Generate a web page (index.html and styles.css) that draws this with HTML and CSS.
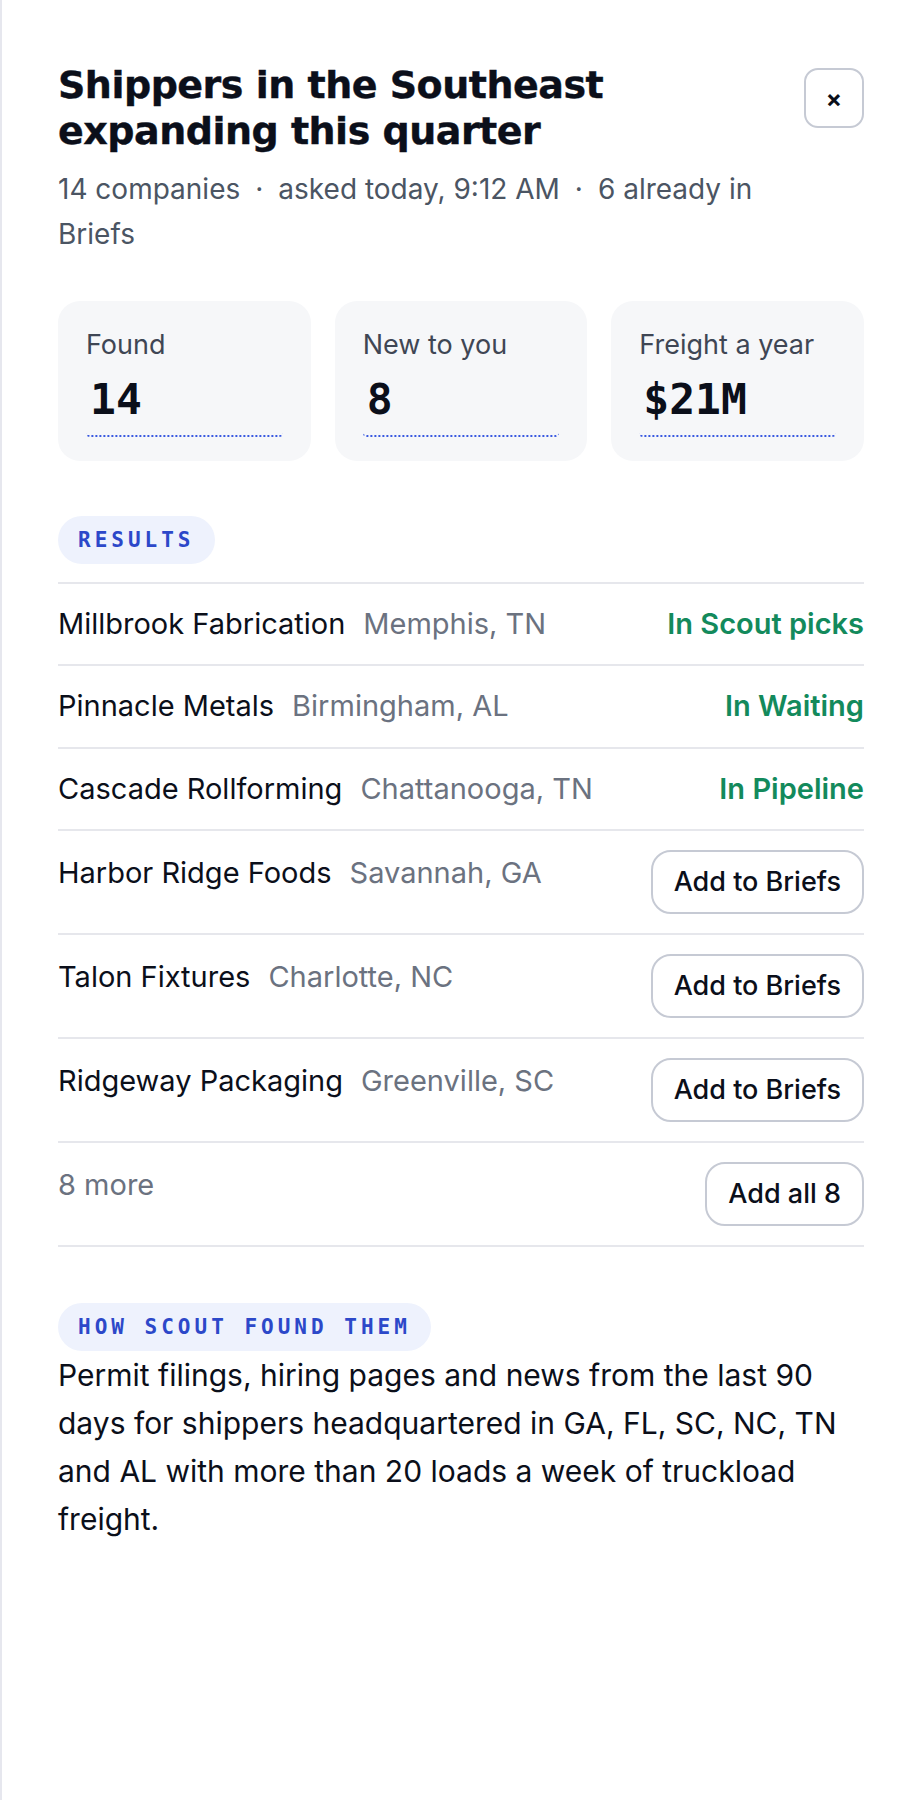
FILE: index.html
```html
<!DOCTYPE html>
<html>
<head>
    <title>Shippers in the Southeast</title>
    <link rel="stylesheet" href="styles.css">
</head>
<body>
    <div class="panel">
        <div class="header">
            <div class="header-text">
                <h1 class="title">Shippers in the Southeast expanding this quarter</h1>
                <p class="meta"><span>14 companies</span><span class="dot">·</span><span>asked today, 9:12 AM</span><span class="dot">·</span><span>6 already in</span> <span>Briefs</span></p>
            </div>
            <button class="close" type="button">×</button>
        </div>

        <div class="stats">
            <div class="stat">
                <div class="stat-label">Found</div>
                <div class="stat-value">14</div>
            </div>
            <div class="stat">
                <div class="stat-label">New to you</div>
                <div class="stat-value">8</div>
            </div>
            <div class="stat">
                <div class="stat-label">Freight a year</div>
                <div class="stat-value">$21M</div>
            </div>
        </div>

        <div class="tag">RESULTS</div>
        <div class="results">
            <div class="row">
                <div class="company"><span class="name">Millbrook Fabrication</span><span class="city">Memphis, TN</span></div>
                <span class="status">In Scout picks</span>
            </div>
            <div class="row">
                <div class="company"><span class="name">Pinnacle Metals</span><span class="city">Birmingham, AL</span></div>
                <span class="status">In Waiting</span>
            </div>
            <div class="row">
                <div class="company"><span class="name">Cascade Rollforming</span><span class="city">Chattanooga, TN</span></div>
                <span class="status">In Pipeline</span>
            </div>
            <div class="row row-action">
                <div class="company"><span class="name">Harbor Ridge Foods</span><span class="city">Savannah, GA</span></div>
                <button class="btn" type="button">Add to Briefs</button>
            </div>
            <div class="row row-action">
                <div class="company"><span class="name">Talon Fixtures</span><span class="city">Charlotte, NC</span></div>
                <button class="btn" type="button">Add to Briefs</button>
            </div>
            <div class="row row-action">
                <div class="company"><span class="name">Ridgeway Packaging</span><span class="city">Greenville, SC</span></div>
                <button class="btn" type="button">Add to Briefs</button>
            </div>
            <div class="row row-action">
                <div class="company"><span class="more">8 more</span></div>
                <button class="btn" type="button">Add all 8</button>
            </div>
        </div>

        <div class="tag tag-how">HOW SCOUT FOUND THEM</div>
        <p class="how">Permit filings, hiring pages and news from the last 90 days for shippers headquartered in GA, FL, SC, NC, TN and AL with more than 20 loads a week of truckload freight.</p>
    </div>
</body>
</html>
```

FILE: styles.css
```css
body {
    margin: 0;
    font-family: Inter, "Noto Sans", sans-serif;
    color: #0b0f1a;
    background: #ffffff;
}
.panel {
    min-height: 1800px;
    box-sizing: border-box;
    border-left: 2px solid #e6e7ee;
    padding: 62px 56px 40px 56px;
}
.header {
    display: flex;
    align-items: flex-start;
    gap: 24px;
}
.header-text {
    flex: 1;
}
.title {
    margin: 0;
    font-family: "DejaVu Sans", sans-serif;
    font-size: 38px;
    line-height: 46px;
    font-weight: 700;
    letter-spacing: -0.5px;
    -webkit-text-stroke: 0.4px #0b0f1a;
    color: #0b0f1a;
    max-width: 640px;
}
.meta {
    margin: 13px 0 0 0;
    font-size: 28px;
    line-height: 1.6;
    color: #4b5563;
}
.dot {
    margin: 0 15px;
}
.close {
    margin-top: 6px;
    width: 60px;
    height: 60px;
    flex: none;
    border: 2px solid #c6cad4;
    border-radius: 14px;
    background: #ffffff;
    font-family: Inter, sans-serif;
    font-size: 24px;
    font-weight: 700;
    color: #0b0f1a;
    padding: 0;
}
.stats {
    display: grid;
    grid-template-columns: 1fr 1fr 1fr;
    gap: 24px;
    margin-top: 44px;
}
.stat {
    background: #f6f7f9;
    border-radius: 22px;
    padding: 22px 28px 24px 28px;
}
.stat-label {
    font-size: 27px;
    line-height: 1.6;
    color: #3f4654;
}
.stat-value {
    margin-top: 7px;
    padding: 0 0 9px 4px;
    font-family: "DejaVu Sans Mono", monospace;
    font-weight: 700;
    font-size: 43px;
    line-height: 53px;
    border-bottom: 2px dotted #3a5ae0;
    border-radius: 0 0 4px 4px;
    color: #0b0f1a;
}
.tag {
    display: inline-block;
    margin-top: 55px;
    padding: 12px 20px;
    background: #eef2fd;
    border-radius: 24px;
    font-family: "DejaVu Sans Mono", monospace;
    font-weight: 700;
    font-size: 21px;
    line-height: 24px;
    letter-spacing: 4px;
    color: #2c48c9;
}
.results {
    margin-top: 18px;
    border-bottom: 2px solid #e6e7ec;
}
.row {
    display: flex;
    justify-content: space-between;
    align-items: center;
    border-top: 2px solid #e6e7ec;
    padding: 17px 0;
    font-size: 29px;
    line-height: 1.6;
}
.row-action {
    align-items: flex-start;
    padding: 19px 0;
}
.name {
    color: #0b0f1a;
}
.city {
    color: #6b7280;
    margin-left: 18px;
}
.more {
    color: #6b7280;
}
.status {
    color: #138a5c;
    font-weight: 600;
}
.btn {
    height: 64px;
    padding: 0 21px;
    border: 2px solid #c6cad4;
    border-radius: 20px;
    background: #ffffff;
    font-family: Inter, sans-serif;
    font-size: 27px;
    font-weight: 500;
    color: #0b0f1a;
}
.tag-how {
    margin-top: 56px;
}
.how {
    margin: 0;
    font-size: 30px;
    line-height: 1.6;
    color: #0b0f1a;
}
```
